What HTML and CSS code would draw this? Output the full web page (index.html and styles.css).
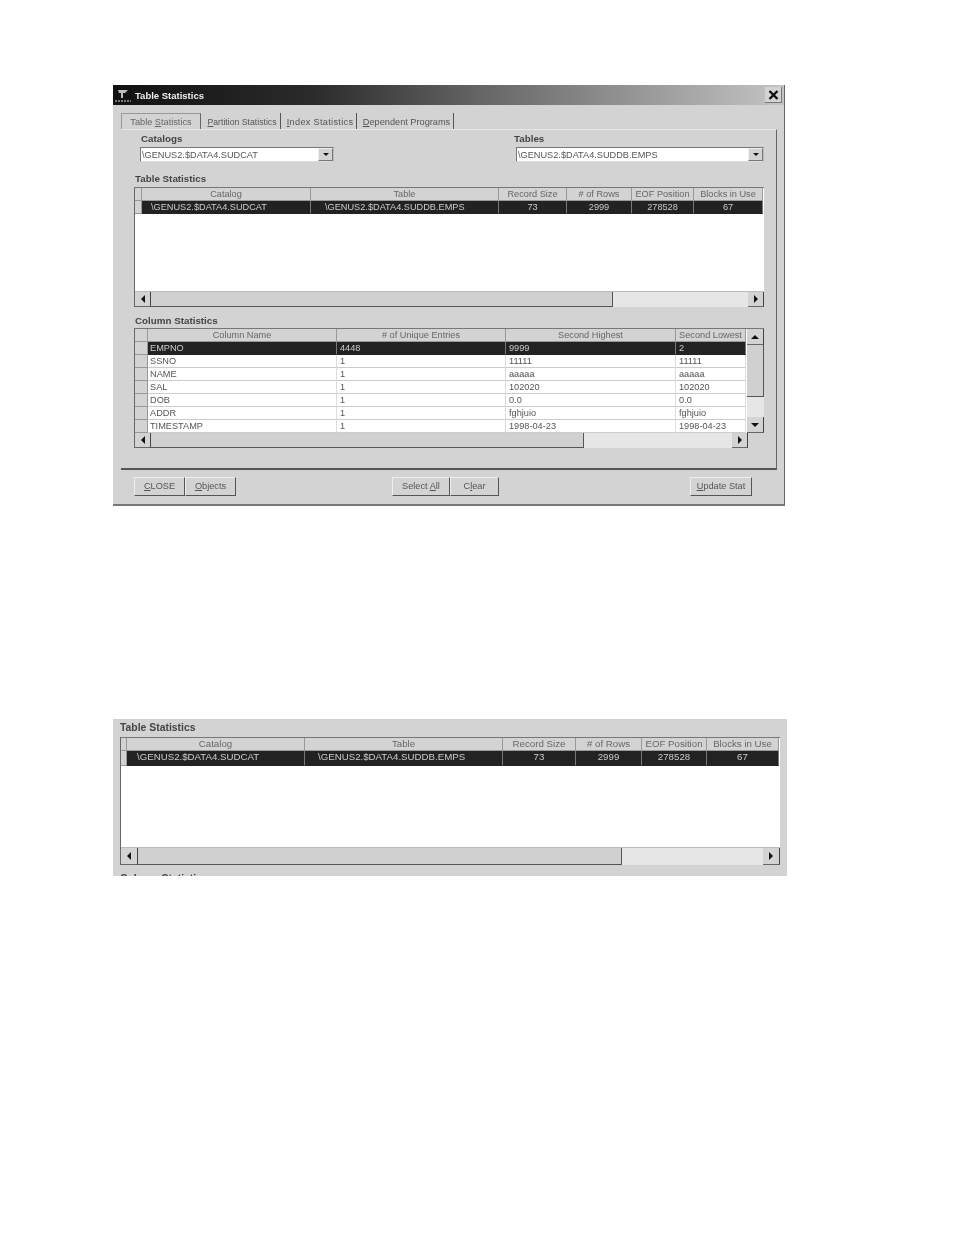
FILE: index.html
```html
<!DOCTYPE html>
<html lang="en">
<head>
<meta charset="utf-8">
<title>Table Statistics</title>
<link rel="stylesheet" href="styles.css">
</head>
<body>
<main class="page">
  <section class="dialog">
    <header class="titlebar">
      <svg class="app-icon" width="18" height="16" viewBox="0 0 18 16"><rect width="18" height="16" fill="#111"/><path d="M4 3h10l-3 3h-2v5H7V6H5z" fill="#bbb"/><path d="M1 14h16" stroke="#999" stroke-width="1.4" stroke-dasharray="2 1"/></svg>
      <span class="title">Table Statistics</span>
      <span class="close"><svg width="11" height="10" viewBox="0 0 11 10"><path d="M1.5 1l8 8M9.5 1l-8 8" stroke="#111" stroke-width="2.4"/></svg></span>
    </header>

    <nav class="tabs">
      <span class="tab tab-active tab-1">Table <u>S</u>tatistics</span>
      <span class="tab tab-2"><u>P</u>artition Statistics</span>
      <span class="tab tab-3"><u>I</u>ndex Statistics</span>
      <span class="tab tab-4"><u>D</u>ependent Programs</span>
    </nav>

    <div class="panel">
      <div class="filters">
        <div class="filter filter-catalog">
          <label class="label">Catalogs</label>
          <div class="combo combo-catalog"><span class="combo-text">\GENUS2.$DATA4.SUDCAT</span><span class="combo-btn"><i class="arrow down small"></i></span></div>
        </div>
        <div class="filter filter-table">
          <label class="label">Tables</label>
          <div class="combo combo-table"><span class="combo-text">\GENUS2.$DATA4.SUDDB.EMPS</span><span class="combo-btn"><i class="arrow down small"></i></span></div>
        </div>
      </div>

      <h2 class="label section section-table">Table Statistics</h2>
      <div class="grid-box box-table">
        <div class="tbl tbl-table">
          <span class="th"></span><span class="th">Catalog</span><span class="th">Table</span><span class="th">Record Size</span><span class="th"># of Rows</span><span class="th">EOF Position</span><span class="th">Blocks in Use</span>
          <span class="th"></span><span class="td sel pad-cat">\GENUS2.$DATA4.SUDCAT</span><span class="td sel pad-tab">\GENUS2.$DATA4.SUDDB.EMPS</span><span class="td sel ctr">73</span><span class="td sel ctr">2999</span><span class="td sel ctr">278528</span><span class="td sel ctr">67</span>
        </div>
        <div class="hbar hbar-table">
          <span class="sb-btn"><i class="arrow left"></i></span><span class="sb-thumb thumb-table"></span><span class="sb-track"></span><span class="sb-btn"><i class="arrow right"></i></span>
        </div>
      </div>

      <h2 class="label section section-column">Column Statistics</h2>
      <div class="grid-box box-column">
        <div class="col-main">
          <div class="tbl tbl-column">
            <span class="th"></span><span class="th">Column Name</span><span class="th"># of Unique Entries</span><span class="th">Second Highest</span><span class="th">Second Lowest</span>
            <span class="th"></span><span class="td sel name">EMPNO</span><span class="td sel">4448</span><span class="td sel">9999</span><span class="td sel">2</span>
            <span class="th"></span><span class="td name">SSNO</span><span class="td">1</span><span class="td">11111</span><span class="td">11111</span>
            <span class="th"></span><span class="td name">NAME</span><span class="td">1</span><span class="td strong">aaaaa</span><span class="td strong">aaaaa</span>
            <span class="th"></span><span class="td name">SAL</span><span class="td">1</span><span class="td">102020</span><span class="td">102020</span>
            <span class="th"></span><span class="td name">DOB</span><span class="td">1</span><span class="td">0.0</span><span class="td">0.0</span>
            <span class="th"></span><span class="td name">ADDR</span><span class="td">1</span><span class="td">fghjuio</span><span class="td">fghjuio</span>
            <span class="th"></span><span class="td name">TIMESTAMP</span><span class="td">1</span><span class="td">1998-04-23</span><span class="td">1998-04-23</span>
          </div>
          <div class="vbar">
            <span class="sb-btn v"><i class="arrow up"></i></span><span class="sb-thumb thumb-v"></span><span class="sb-track"></span><span class="sb-btn v"><i class="arrow down"></i></span>
          </div>
        </div>
        <div class="hbar hbar-column">
          <span class="sb-btn"><i class="arrow left"></i></span><span class="sb-thumb thumb-column"></span><span class="sb-track"></span><span class="sb-btn"><i class="arrow right"></i></span><span class="corner"></span>
        </div>
      </div>
    </div>

    <footer class="actions">
      <div class="btn-group">
        <span class="btn btn-close"><u>C</u>LOSE</span><span class="btn btn-objects"><u>O</u>bjects</span>
      </div>
      <div class="btn-group">
        <span class="btn btn-select">Select <u>A</u>ll</span><span class="btn btn-clear">C<u>l</u>ear</span>
      </div>
      <div class="btn-group">
        <span class="btn btn-update"><u>U</u>pdate Stat</span>
      </div>
    </footer>
  </section>

  <section class="crop">
    <h2 class="label crop-label">Table Statistics</h2>
    <div class="grid-box box-crop">
      <div class="tbl tbl-crop">
        <span class="th"></span><span class="th">Catalog</span><span class="th">Table</span><span class="th">Record Size</span><span class="th"># of Rows</span><span class="th">EOF Position</span><span class="th">Blocks in Use</span>
        <span class="th"></span><span class="td sel pad-crop-cat">\GENUS2.$DATA4.SUDCAT</span><span class="td sel pad-crop-tab">\GENUS2.$DATA4.SUDDB.EMPS</span><span class="td sel ctr">73</span><span class="td sel ctr">2999</span><span class="td sel ctr">278528</span><span class="td sel ctr">67</span>
      </div>
      <div class="hbar hbar-crop">
        <span class="sb-btn"><i class="arrow left"></i></span><span class="sb-thumb thumb-crop"></span><span class="sb-track"></span><span class="sb-btn"><i class="arrow right"></i></span>
      </div>
    </div>
    <h2 class="label crop-next">Column Statistics</h2>
  </section>
</main>
</body>
</html>
```
FILE: styles.css
```css
* { box-sizing: border-box; }
html, body { margin: 0; background: #fff; }
body { width: 954px; height: 1235px; overflow: hidden; font-family: "Liberation Sans", Arial, sans-serif; font-size: 9.2px; color: #555; }
.page { padding: 85px 0 0 113px; }
u { text-decoration: underline; }

.dialog { width: 672px; height: 421px; background: #d3d3d3; border-right: 1px solid #666; border-bottom: 2px solid #777; filter: blur(.45px); display: flex; flex-direction: column; }

.titlebar { height: 20px; flex: none; display: flex; align-items: center; background: linear-gradient(90deg, #111 0, #2b2b2b 30%, #666 55%, #c4c4c4 100%); padding: 0 2px 0 1px; }
.app-icon { flex: none; }
.title { color: #eee; font-weight: bold; font-size: 9.5px; margin-left: 3px; flex: 1; }
.close { width: 17px; height: 16px; background: #d3d3d3; display: flex; align-items: center; justify-content: center; border-right: 1px solid #777; border-bottom: 1px solid #777; }

.tabs { height: 24px; flex: none; display: flex; align-items: flex-end; padding-left: 8px; }
.tab { height: 16px; display: block; text-align: center; line-height: 18px; border-right: 1px solid #555; font-size: 9.2px; white-space: nowrap; }
.tab-active { border: 1px solid #999; border-bottom: none; border-right-color: #666; background: #d3d3d3; color: #666; line-height: 16px; }
.tab-1 { width: 80px; margin-right: 3px; }
.tab-2 { width: 77px; margin-right: 3px; font-size: 8.7px; }
.tab-3 { width: 73px; margin-right: 3px; letter-spacing: .3px; }
.tab-4 { width: 94px; }

.panel { width: 656px; height: 341px; flex: none; margin-left: 8px; border-top: 1px solid #e8e8e8; border-right: 1px solid #666; border-bottom: 2px solid #555; padding: 3px 0 0 13px; }

.label { display: block; margin: 0; font-size: 9.8px; font-weight: bold; color: #444; line-height: 11px; }
.filters { display: flex; height: 29px; }
.filter-catalog { width: 380px; padding-left: 7px; }
.combo { height: 15px; margin-top: 3px; background: #fff; border: 1px solid #777; border-right-color: #bbb; border-bottom-color: #ddd; display: flex; align-items: center; justify-content: space-between; }
.combo-catalog { width: 194px; margin-left: -1px; }
.combo-table { width: 248px; margin-left: 2px; }
.combo-text { white-space: nowrap; padding-left: 1px; }
.combo-btn { width: 15px; height: 13px; background: #d3d3d3; border-top: 1px solid #eee; border-left: 1px solid #eee; border-right: 1px solid #777; border-bottom: 1px solid #777; display: flex; align-items: center; justify-content: center; }

.section { padding-left: 1px; }
.section-table { margin-top: 11px; margin-bottom: 3px; }
.section-column { margin-top: 8px; margin-bottom: 2px; }

.grid-box { border-left: 1px solid #666; border-top: 1px solid #777; background: #fff; display: flex; flex-direction: column; }
.box-table { width: 630px; height: 120px; }
.box-column { width: 630px; height: 120px; background: #d3d3d3; }
.col-main { display: flex; height: 104px; flex: none; }

.tbl { display: grid; grid-auto-rows: 13px; align-content: start; flex: 1; min-height: 0; background: #fff; }
.tbl-table { grid-template-columns: 7px 169px 188px 68px 65px 62px 69px; }
.tbl-column { grid-template-columns: 13px 189px 169px 170px 70px; }

.th { background: #d3d3d3; border-right: 1px solid #999; border-bottom: 1px solid #999; text-align: center; line-height: 13px; white-space: nowrap; overflow: hidden; color: #666; }
.td { border-right: 1px solid #ddd; border-bottom: 1px solid #ccc; padding-left: 3px; line-height: 13px; white-space: nowrap; overflow: hidden; color: #555; }
.name { padding-left: 2px; }
.ctr { text-align: center; padding-left: 0; }
.pad-cat { padding-left: 9px; }
.pad-tab { padding-left: 14px; }
.pad-crop-cat { padding-left: 10px; }
.pad-crop-tab { padding-left: 13px; }
.strong { font-weight: bold; color: #777; }
.sel { background: #222; color: #ccc; border-right-color: #777; border-bottom-color: #222; }

.hbar { display: flex; height: 16px; flex: none; background: #e6e6e6; border-top: 1px solid #bbb; }
.hbar-column { height: 15px; border-top: none; }
.vbar { width: 17px; flex: none; display: flex; flex-direction: column; background: #e6e6e6; }
.sb-btn { width: 16px; flex: none; background: #d3d3d3; border-right: 1px solid #444; border-bottom: 1px solid #666; display: flex; align-items: center; justify-content: center; }
.sb-btn.v { width: 17px; height: 16px; }
.sb-thumb { flex: none; background: #d0d0d0; border-right: 1px solid #555; border-bottom: 1px solid #555; }
.sb-track { flex: 1; }
.thumb-table { width: 462px; }
.thumb-column { width: 433px; }
.thumb-v { height: 52px; width: 17px; }
.corner { width: 16px; background: #d3d3d3; flex: none; }

.arrow { display: block; width: 0; height: 0; border-style: solid; border-color: transparent; }
.arrow.left { border-width: 4px 4px 4px 0; border-right-color: #111; }
.arrow.right { border-width: 4px 0 4px 4px; border-left-color: #111; }
.arrow.up { border-width: 0 4px 4px; border-bottom-color: #111; }
.arrow.down { border-width: 4px 4px 0; border-top-color: #111; }
.arrow.down.small { border-width: 3px 3px 0; }

.actions { flex: 1; display: flex; padding: 7px 0 0 21px; align-items: flex-start; }
.btn-group { display: flex; }
.btn-group:nth-child(2) { margin-left: 156px; }
.btn-group:nth-child(3) { margin-left: 191px; }
.btn { height: 19px; display: block; text-align: center; line-height: 17px; background: #d3d3d3; border-top: 1px solid #eee; border-left: 1px solid #eee; border-right: 1px solid #555; border-bottom: 1px solid #555; white-space: nowrap; }
.btn-close { width: 51px; }
.btn-objects { width: 51px; }
.btn-select { width: 58px; }
.btn-clear { width: 49px; }
.btn-update { width: 62px; }

.crop { width: 674px; height: 157px; margin-top: 213px; background: #d3d3d3; overflow: hidden; padding: 3px 0 0 7px; filter: blur(.45px); }
.crop-label { font-size: 10.4px; line-height: 12px; margin-bottom: 3px; }
.box-crop { width: 660px; height: 128px; }
.tbl-crop { grid-template-columns: 6px 178px 198px 73px 66px 65px 72px; grid-template-rows: 13px 15px; font-size: 9.7px; }
.tbl-crop .th, .tbl-crop .td { line-height: 12px; }
.hbar-crop { height: 18px; }
.hbar-crop .sb-btn { width: 17px; }
.thumb-crop { width: 484px; }
.crop-next { margin-top: 8px; font-size: 10.4px; }
```
